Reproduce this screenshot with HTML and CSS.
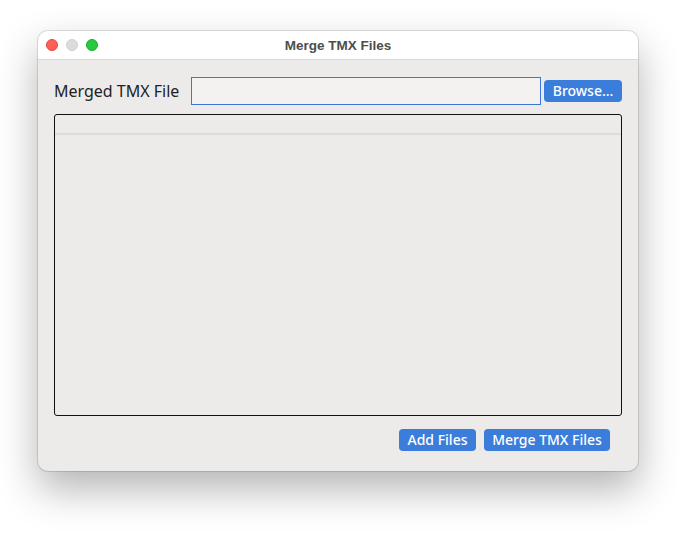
FILE: index.html
```html
<!DOCTYPE html>
<html lang="en">

<head>
    <meta charset="UTF-8">
    <meta name="viewport" content="width=device-width, initial-scale=1.0">
    <title>Merge TMX Files</title>
    <link rel="stylesheet" href="styles.css">
</head>

<body>
    <div class="window">
        <div class="titlebar">
            <div class="lights">
                <span class="light red"></span>
                <span class="light gray"></span>
                <span class="light green"></span>
            </div>
            <div class="title">Merge TMX Files</div>
        </div>

        <div class="content">
            <div class="file-row">
                <label class="file-label">Merged TMX File</label>
                <input type="text" class="file-input">
                <button type="button" class="btn browse">Browse...</button>
            </div>

            <div class="file-table">
                <div class="table-header"></div>
            </div>

            <div class="actions">
                <button type="button" class="btn add-btn">Add Files</button>
                <button type="button" class="btn merge-btn">Merge TMX Files</button>
            </div>
        </div>
    </div>
</body>

</html>
```

FILE: styles.css
```css
body {
    margin: 0;
    padding: 31px 0 0 38px;
    min-height: 538px;
    box-sizing: border-box;
    background-color: #ffffff;
    font-family: "Noto Sans", "Open Sans", sans-serif;
}

.window {
    width: 600px;
    height: 440px;
    border-radius: 10px;
    background-color: #ecebe9;
    box-shadow: 0 0 0 1px rgba(0, 0, 0, 0.12), 0 18px 40px rgba(0, 0, 0, 0.3);
    overflow: hidden;
    display: flex;
    flex-direction: column;
}

.titlebar {
    height: 28px;
    background-color: #ffffff;
    border-bottom: 1px solid #d8d8d8;
    position: relative;
    display: flex;
    align-items: center;
    justify-content: center;
    flex-shrink: 0;
}

.lights {
    position: absolute;
    left: 8px;
    top: 8px;
    display: flex;
    gap: 8px;
}

.light {
    width: 12px;
    height: 12px;
    border-radius: 50%;
    box-sizing: border-box;
}

.light.red {
    background-color: #fe5f57;
    border: 1px solid #e2463f;
}

.light.gray {
    background-color: #dddcdc;
    border: 1px solid #cfcfcf;
}

.light.green {
    background-color: #28c840;
    border: 1px solid #1aab29;
}

.title {
    font-family: "Liberation Sans", Arial, sans-serif;
    font-size: 13.5px;
    font-weight: bold;
    color: #4d4d4d;
    padding-top: 1px;
}

.content {
    padding: 17px 16px 0 16px;
    display: flex;
    flex-direction: column;
}

.file-row {
    display: flex;
    align-items: center;
    height: 28px;
}

.file-label {
    font-size: 16px;
    color: #222222;
    width: 137px;
}

.file-input {
    width: 351px;
    height: 28px;
    box-sizing: border-box;
    border: 1px solid #3b78d8;
    background-color: #f3f2f1;
    padding: 0 4px;
    margin: 0;
    outline: none;
}

.btn {
    background-color: #3b7ddb;
    color: #ffffff;
    border: none;
    border-radius: 4px;
    font-family: "Noto Sans", "Open Sans", sans-serif;
    font-size: 14px;
    font-weight: 500;
    height: 22px;
    padding: 0;
    line-height: 22px;
    text-align: center;
    cursor: pointer;
}

.browse {
    margin-left: 3px;
    width: 78px;
}

.add-btn {
    width: 77px;
}

.merge-btn {
    width: 126px;
}

.file-table {
    margin-top: 9px;
    height: 302px;
    border: 1px solid #111111;
    border-radius: 3px;
    box-sizing: border-box;
    background-color: #ecebe9;
}

.table-header {
    height: 18px;
    border-bottom: 2px solid #dddcda;
}

.actions {
    display: flex;
    justify-content: flex-end;
    gap: 8px;
    margin-top: 13px;
    padding-right: 12px;
}
```
